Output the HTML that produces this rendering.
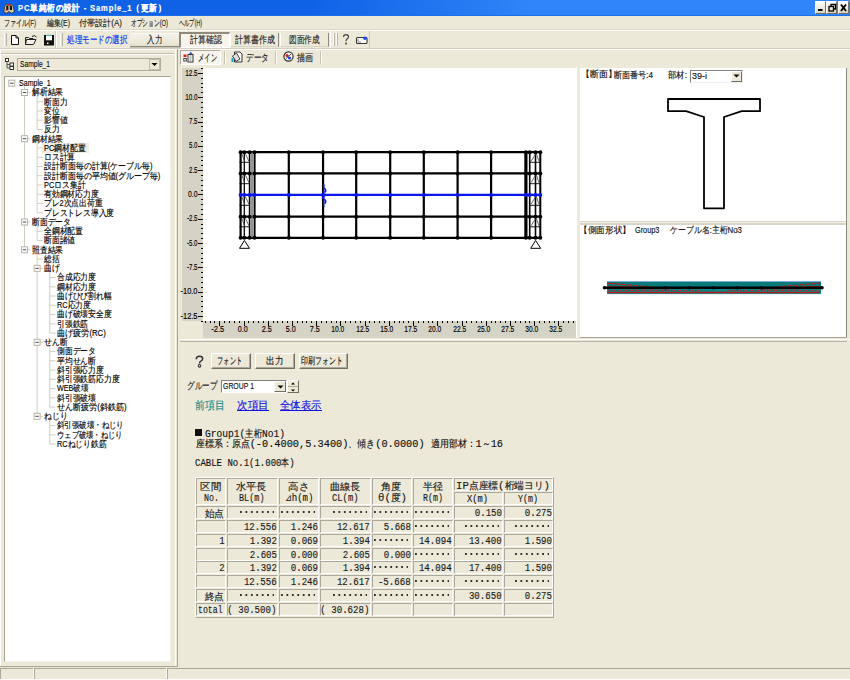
<!DOCTYPE html><html><head><meta charset="utf-8"><style>
html,body{margin:0;padding:0;width:850px;height:680px;overflow:hidden;background:#ECE9D8;}
body{position:relative;font-family:"Liberation Sans",sans-serif;}
div{position:absolute;box-sizing:border-box;}
.t{white-space:nowrap;line-height:1;-webkit-text-stroke:0.15px currentColor;}
svg{position:absolute;overflow:visible;}
</style></head><body>
<div style="left:0px;top:0px;width:850px;height:16px;background:linear-gradient(90deg,#0F62E6 0%,#0F62E6 36.5%,#2E86F8 62.6%,#2E86F8 100%);"></div>
<div style="left:0px;top:15px;width:850px;height:1px;background:#1E6EEA;"></div>
<svg style="left:3px;top:3px" width="12" height="11" viewBox="0 0 12 11">
<path d="M0.8 9 L1.8 3 L3.5 1 L6 1.8 L8.5 1 L10.2 3 L11.2 9 L8.5 10.2 L6 8.5 L3.5 10.2 Z" fill="#D8CCB0" stroke="#3a2a10" stroke-width="0.8"/>
<rect x="3.2" y="2.5" width="2.2" height="4.5" fill="#111"/><rect x="6.8" y="2.5" width="2.2" height="4.5" fill="#111"/>
<rect x="5" y="1" width="2" height="1.5" fill="#e01010"/><rect x="2.5" y="6.5" width="2" height="1.2" fill="#c02020"/>
</svg>
<div class="t" style="left:18.00px;top:3.98px;font-family:'Liberation Sans',sans-serif;font-size:9px;color:#fff;font-weight:bold;letter-spacing:1px;transform:scaleX(0.8432);transform-origin:0 0;">PC単純桁の設計 - Sample_1（更新）</div>
<div style="left:815px;top:1px;width:11px;height:13px;background:linear-gradient(180deg,#fff 0%,#ECE9D8 60%,#D8D2BC 100%);border-top:1px solid #fff;border-left:1px solid #fff;border-right:1px solid #716F64;border-bottom:1px solid #716F64;"></div>
<div style="left:826px;top:1px;width:11px;height:13px;background:linear-gradient(180deg,#fff 0%,#ECE9D8 60%,#D8D2BC 100%);border-top:1px solid #fff;border-left:1px solid #fff;border-right:1px solid #716F64;border-bottom:1px solid #716F64;"></div>
<div style="left:838px;top:1px;width:11px;height:13px;background:linear-gradient(180deg,#fff 0%,#ECE9D8 60%,#D8D2BC 100%);border-top:1px solid #fff;border-left:1px solid #fff;border-right:1px solid #716F64;border-bottom:1px solid #716F64;"></div>
<svg style="left:815px;top:1px" width="34" height="13" viewBox="0 0 34 13"><rect x="3" y="8" width="4.5" height="2" fill="#000"/><rect x="14" y="5.5" width="4.5" height="4.5" fill="none" stroke="#000" stroke-width="1.3"/><path d="M16 5.5 V3.5 H20.5 V8 H18.5" fill="none" stroke="#000" stroke-width="1.3"/><path d="M26 3.5 L31 10 M31 3.5 L26 10" stroke="#000" stroke-width="1.9"/></svg>
<div class="t" style="left:4.00px;top:19.28px;font-family:'Liberation Sans',sans-serif;font-size:9px;color:#222;transform:scaleX(0.6737);transform-origin:0 0;">ファイル(F)</div>
<div class="t" style="left:47.00px;top:19.28px;font-family:'Liberation Sans',sans-serif;font-size:9px;color:#222;transform:scaleX(0.7667);transform-origin:0 0;">編集(E)</div>
<div class="t" style="left:79.00px;top:19.28px;font-family:'Liberation Sans',sans-serif;font-size:9px;color:#222;transform:scaleX(0.8958);transform-origin:0 0;">付帯設計(A)</div>
<div class="t" style="left:131.00px;top:19.28px;font-family:'Liberation Sans',sans-serif;font-size:9px;color:#222;transform:scaleX(0.6379);transform-origin:0 0;">オプション(O)</div>
<div class="t" style="left:179.00px;top:19.28px;font-family:'Liberation Sans',sans-serif;font-size:9px;color:#222;transform:scaleX(0.5823);transform-origin:0 0;">ヘルプ(H)</div>
<div style="left:0px;top:30px;width:850px;height:1px;background:#fff;"></div>
<div style="left:0px;top:29px;width:850px;height:1px;background:#DCD8C8;"></div>
<div style="left:4px;top:33px;width:3px;height:13px;border-left:1px solid #fff;border-right:1px solid #B8B4A4;background:#E4E0D0;"></div>
<svg style="left:9px;top:34px" width="48" height="12" viewBox="0 0 48 12">
<path d="M2.5 1.5 H7 L9.5 4 V10.5 H2.5 Z" fill="#fff" stroke="#111" stroke-width="1"/><path d="M7 1.5 V4 H9.5" fill="none" stroke="#111"/>
<path d="M17.5 5.5 H27 L24.5 10.5 H16.5 Z" fill="#F4F2EA" stroke="#222"/><path d="M16.5 10.5 V3.5 H19.5 L20.5 4.5 H24 V5.5" fill="none" stroke="#222"/><path d="M23 2.5 Q25.5 0.5 27.5 3" fill="none" stroke="#222"/>
<rect x="35" y="1" width="10" height="10.5" fill="#111"/><rect x="37" y="1.8" width="6" height="4.5" fill="#fff"/><rect x="38" y="8.5" width="1.5" height="1.5" fill="#fff"/><rect x="37" y="0.8" width="6" height="1" fill="#5cc"/>
</svg>
<div style="left:56px;top:31px;width:1px;height:17px;background:#fff;"></div>
<div style="left:55px;top:31px;width:1px;height:17px;background:#D0CCBC;"></div>
<div style="left:60px;top:33px;width:3px;height:13px;border-left:1px solid #fff;border-right:1px solid #B8B4A4;background:#E4E0D0;"></div>
<div class="t" style="left:67.00px;top:34.94px;font-family:'Liberation Sans',sans-serif;font-size:9.5px;color:#0030F0;transform:scaleX(0.7500);transform-origin:0 0;">処理モードの選択</div>
<div style="left:130px;top:33px;width:49px;height:14px;background:linear-gradient(180deg,#F4F2EA 0%,#ECE9D8 70%,#E2DECE 100%);border-top:1px solid #FAF9F4;border-bottom:1px solid #8E8B7C;box-shadow:0 1px 0 #C8C4B4;"></div>
<div class="t" style="left:147.30px;top:34.94px;font-family:'Liberation Sans',sans-serif;font-size:9.5px;color:#222;transform:scaleX(0.7500);transform-origin:0 0;">入力</div>
<div style="left:179px;top:32px;width:51px;height:16px;background:#F6F4EC;border-top:2px solid #8E8B7C;border-left:2px solid #8E8B7C;border-right:1px solid #fff;border-bottom:1px solid #fff;"></div>
<div class="t" style="left:190.00px;top:35.24px;font-family:'Liberation Sans',sans-serif;font-size:9.5px;color:#222;transform:scaleX(0.8000);transform-origin:0 0;">計算確認</div>
<div style="left:230px;top:33px;width:49px;height:14px;background:#ECE9D8;border-left:1px solid #fff;border-right:1px solid #8E8B7C;border-bottom:1px solid #D8D4C4;"></div>
<div class="t" style="left:235.00px;top:34.94px;font-family:'Liberation Sans',sans-serif;font-size:9.5px;color:#222;transform:scaleX(0.8000);transform-origin:0 0;">計算書作成</div>
<div style="left:280px;top:33px;width:49px;height:14px;background:#ECE9D8;border-left:1px solid #fff;border-right:1px solid #8E8B7C;border-bottom:1px solid #D8D4C4;"></div>
<div class="t" style="left:289.00px;top:34.94px;font-family:'Liberation Sans',sans-serif;font-size:9.5px;color:#222;transform:scaleX(0.7650);transform-origin:0 0;">図面作成</div>
<div style="left:330px;top:31px;width:1px;height:17px;background:#fff;"></div>
<div style="left:333px;top:33px;width:2px;height:13px;border-left:1px solid #fff;border-right:1px solid #B8B4A4;"></div>
<div style="left:336px;top:33px;width:2px;height:13px;border-left:1px solid #fff;border-right:1px solid #B8B4A4;"></div>
<svg style="left:341px;top:33px" width="28" height="13" viewBox="0 0 28 13">
<path d="M2.5 4 Q2.5 1.6 5 1.6 Q7.5 1.6 7.5 3.7 Q7.5 5 6 5.9 Q5 6.6 5 8.2" fill="none" stroke="#444" stroke-width="1.2"/><circle cx="5" cy="10.4" r="1" fill="#444"/>
<rect x="15.5" y="4.5" width="10.5" height="6" rx="1" fill="#fff" stroke="#333" stroke-width="1.1"/><path d="M17 6 V9 H20" fill="none" stroke="#888"/><circle cx="24" cy="5.3" r="1.8" fill="#1850F0"/>
</svg>
<div style="left:369px;top:31px;width:1px;height:17px;background:#D0CCBC;"></div>
<div style="left:0px;top:48px;width:850px;height:1px;background:#D4D0C0;"></div>
<div style="left:0px;top:49px;width:850px;height:1px;background:#fff;"></div>
<div style="left:0px;top:53px;width:174px;height:1px;background:#C4C0B0;"></div>
<div style="left:0px;top:54px;width:174px;height:1px;background:#fff;"></div>
<svg style="left:5px;top:58px" width="10" height="12" viewBox="0 0 10 12">
<rect x="0.5" y="0.5" width="3" height="3" fill="#fff" stroke="#333"/><path d="M2 3.5 V10 H5 M2 6.5 H5" fill="none" stroke="#555"/>
<rect x="5" y="5" width="3.5" height="3" fill="#fff" stroke="#333"/><rect x="5" y="8.5" width="3.5" height="3" fill="#fff" stroke="#333"/>
</svg>
<div style="left:17px;top:58px;width:144px;height:13px;background:#ECE9D8;border:1px solid #B0AC9C;"></div>
<div class="t" style="left:19.70px;top:59.98px;font-family:'Liberation Sans',sans-serif;font-size:9px;color:#111;transform:scaleX(0.7402);transform-origin:0 0;">Sample_1</div>
<div style="left:149px;top:59px;width:11px;height:11px;background:#ECE9D8;border:1px solid #C0BCAC;"></div>
<svg style="left:151px;top:62px" width="7" height="5" viewBox="0 0 7 5"><path d="M0.5 1 H6.5 L3.5 4 Z" fill="#000"/></svg>
<div style="left:175px;top:49px;width:1px;height:617px;background:#fff;"></div>
<div style="left:177px;top:49px;width:1px;height:618px;background:#A8A494;"></div>
<div style="left:0px;top:666px;width:178px;height:1px;background:#A8A494;"></div>
<div style="left:4px;top:76px;width:167px;height:586px;background:#fff;border-top:1px solid #A8A494;border-left:1px solid #A8A494;border-right:1px solid #F4F2EA;border-bottom:1px solid #F4F2EA;"></div>
<svg style="left:0px;top:0px" width="176" height="680" viewBox="0 0 176 680"><line x1="24.5" y1="86.7" x2="24.5" y2="249.8" stroke="#CFCEC0" stroke-width="1"/><line x1="37.1" y1="96.0" x2="37.1" y2="129.5" stroke="#CFCEC0" stroke-width="1"/><line x1="37.1" y1="142.2" x2="37.1" y2="212.8" stroke="#CFCEC0" stroke-width="1"/><line x1="37.1" y1="225.5" x2="37.1" y2="240.5" stroke="#CFCEC0" stroke-width="1"/><line x1="37.1" y1="253.3" x2="37.1" y2="416.3" stroke="#CFCEC0" stroke-width="1"/><line x1="49.8" y1="271.8" x2="49.8" y2="333.1" stroke="#CFCEC0" stroke-width="1"/><line x1="49.8" y1="345.8" x2="49.8" y2="407.1" stroke="#CFCEC0" stroke-width="1"/><line x1="49.8" y1="419.8" x2="49.8" y2="444.1" stroke="#CFCEC0" stroke-width="1"/><line x1="24.5" y1="92.5" x2="30.1" y2="92.5" stroke="#CFCEC0" stroke-width="1"/><line x1="37.1" y1="101.7" x2="42.8" y2="101.7" stroke="#CFCEC0" stroke-width="1"/><line x1="37.1" y1="111.0" x2="42.8" y2="111.0" stroke="#CFCEC0" stroke-width="1"/><line x1="37.1" y1="120.2" x2="42.8" y2="120.2" stroke="#CFCEC0" stroke-width="1"/><line x1="37.1" y1="129.5" x2="42.8" y2="129.5" stroke="#CFCEC0" stroke-width="1"/><line x1="24.5" y1="138.7" x2="30.1" y2="138.7" stroke="#CFCEC0" stroke-width="1"/><line x1="37.1" y1="148.0" x2="42.8" y2="148.0" stroke="#CFCEC0" stroke-width="1"/><line x1="37.1" y1="157.2" x2="42.8" y2="157.2" stroke="#CFCEC0" stroke-width="1"/><line x1="37.1" y1="166.5" x2="42.8" y2="166.5" stroke="#CFCEC0" stroke-width="1"/><line x1="37.1" y1="175.7" x2="42.8" y2="175.7" stroke="#CFCEC0" stroke-width="1"/><line x1="37.1" y1="185.0" x2="42.8" y2="185.0" stroke="#CFCEC0" stroke-width="1"/><line x1="37.1" y1="194.2" x2="42.8" y2="194.2" stroke="#CFCEC0" stroke-width="1"/><line x1="37.1" y1="203.5" x2="42.8" y2="203.5" stroke="#CFCEC0" stroke-width="1"/><line x1="37.1" y1="212.8" x2="42.8" y2="212.8" stroke="#CFCEC0" stroke-width="1"/><line x1="24.5" y1="222.0" x2="30.1" y2="222.0" stroke="#CFCEC0" stroke-width="1"/><line x1="37.1" y1="231.3" x2="42.8" y2="231.3" stroke="#CFCEC0" stroke-width="1"/><line x1="37.1" y1="240.5" x2="42.8" y2="240.5" stroke="#CFCEC0" stroke-width="1"/><line x1="24.5" y1="249.8" x2="30.1" y2="249.8" stroke="#CFCEC0" stroke-width="1"/><line x1="37.1" y1="259.0" x2="42.8" y2="259.0" stroke="#CFCEC0" stroke-width="1"/><line x1="37.1" y1="268.3" x2="42.8" y2="268.3" stroke="#CFCEC0" stroke-width="1"/><line x1="49.8" y1="277.5" x2="55.5" y2="277.5" stroke="#CFCEC0" stroke-width="1"/><line x1="49.8" y1="286.8" x2="55.5" y2="286.8" stroke="#CFCEC0" stroke-width="1"/><line x1="49.8" y1="296.0" x2="55.5" y2="296.0" stroke="#CFCEC0" stroke-width="1"/><line x1="49.8" y1="305.3" x2="55.5" y2="305.3" stroke="#CFCEC0" stroke-width="1"/><line x1="49.8" y1="314.6" x2="55.5" y2="314.6" stroke="#CFCEC0" stroke-width="1"/><line x1="49.8" y1="323.8" x2="55.5" y2="323.8" stroke="#CFCEC0" stroke-width="1"/><line x1="49.8" y1="333.1" x2="55.5" y2="333.1" stroke="#CFCEC0" stroke-width="1"/><line x1="37.1" y1="342.3" x2="42.8" y2="342.3" stroke="#CFCEC0" stroke-width="1"/><line x1="49.8" y1="351.6" x2="55.5" y2="351.6" stroke="#CFCEC0" stroke-width="1"/><line x1="49.8" y1="360.8" x2="55.5" y2="360.8" stroke="#CFCEC0" stroke-width="1"/><line x1="49.8" y1="370.1" x2="55.5" y2="370.1" stroke="#CFCEC0" stroke-width="1"/><line x1="49.8" y1="379.3" x2="55.5" y2="379.3" stroke="#CFCEC0" stroke-width="1"/><line x1="49.8" y1="388.6" x2="55.5" y2="388.6" stroke="#CFCEC0" stroke-width="1"/><line x1="49.8" y1="397.8" x2="55.5" y2="397.8" stroke="#CFCEC0" stroke-width="1"/><line x1="49.8" y1="407.1" x2="55.5" y2="407.1" stroke="#CFCEC0" stroke-width="1"/><line x1="37.1" y1="416.3" x2="42.8" y2="416.3" stroke="#CFCEC0" stroke-width="1"/><line x1="49.8" y1="425.6" x2="55.5" y2="425.6" stroke="#CFCEC0" stroke-width="1"/><line x1="49.8" y1="434.9" x2="55.5" y2="434.9" stroke="#CFCEC0" stroke-width="1"/><line x1="49.8" y1="444.1" x2="55.5" y2="444.1" stroke="#CFCEC0" stroke-width="1"/><rect x="8.8" y="80.2" width="6" height="6" fill="#fff" stroke="#B4B2A0" stroke-width="1"/><line x1="10.1" y1="83.2" x2="13.5" y2="83.2" stroke="#444" stroke-width="1"/><rect x="21.5" y="89.5" width="6" height="6" fill="#fff" stroke="#B4B2A0" stroke-width="1"/><line x1="22.8" y1="92.5" x2="26.2" y2="92.5" stroke="#444" stroke-width="1"/><rect x="21.5" y="135.7" width="6" height="6" fill="#fff" stroke="#B4B2A0" stroke-width="1"/><line x1="22.8" y1="138.7" x2="26.2" y2="138.7" stroke="#444" stroke-width="1"/><rect x="21.5" y="219.0" width="6" height="6" fill="#fff" stroke="#B4B2A0" stroke-width="1"/><line x1="22.8" y1="222.0" x2="26.2" y2="222.0" stroke="#444" stroke-width="1"/><rect x="21.5" y="246.8" width="6" height="6" fill="#fff" stroke="#B4B2A0" stroke-width="1"/><line x1="22.8" y1="249.8" x2="26.2" y2="249.8" stroke="#444" stroke-width="1"/><rect x="34.1" y="265.3" width="6" height="6" fill="#fff" stroke="#B4B2A0" stroke-width="1"/><line x1="35.4" y1="268.3" x2="38.8" y2="268.3" stroke="#444" stroke-width="1"/><rect x="34.1" y="339.3" width="6" height="6" fill="#fff" stroke="#B4B2A0" stroke-width="1"/><line x1="35.4" y1="342.3" x2="38.8" y2="342.3" stroke="#444" stroke-width="1"/><rect x="34.1" y="413.3" width="6" height="6" fill="#fff" stroke="#B4B2A0" stroke-width="1"/><line x1="35.4" y1="416.3" x2="38.8" y2="416.3" stroke="#444" stroke-width="1"/></svg>
<div class="t" style="left:19.00px;top:79.07px;font-family:'Liberation Sans',sans-serif;font-size:8.6px;color:#000;transform:scaleX(0.8216);transform-origin:0 0;">Sample_1</div>
<div class="t" style="left:31.65px;top:88.33px;font-family:'Liberation Sans',sans-serif;font-size:8.6px;color:#000;transform:scaleX(0.8667);transform-origin:0 0;">解析結果</div>
<div class="t" style="left:44.30px;top:97.58px;font-family:'Liberation Sans',sans-serif;font-size:8.6px;color:#000;transform:scaleX(0.8667);transform-origin:0 0;">断面力</div>
<div class="t" style="left:44.30px;top:106.83px;font-family:'Liberation Sans',sans-serif;font-size:8.6px;color:#000;transform:scaleX(0.8667);transform-origin:0 0;">変位</div>
<div class="t" style="left:44.30px;top:116.09px;font-family:'Liberation Sans',sans-serif;font-size:8.6px;color:#000;transform:scaleX(0.8667);transform-origin:0 0;">影響値</div>
<div class="t" style="left:44.30px;top:125.34px;font-family:'Liberation Sans',sans-serif;font-size:8.6px;color:#000;transform:scaleX(0.8667);transform-origin:0 0;">反力</div>
<div class="t" style="left:31.65px;top:134.60px;font-family:'Liberation Sans',sans-serif;font-size:8.6px;color:#000;transform:scaleX(0.8667);transform-origin:0 0;">鋼材結果</div>
<div style="left:42px;top:143px;width:47px;height:10px;background:#EFEDE2;"></div>
<div class="t" style="left:44.30px;top:143.85px;font-family:'Liberation Sans',sans-serif;font-size:8.6px;color:#000;transform:scaleX(0.8675);transform-origin:0 0;">PC鋼材配置</div>
<div class="t" style="left:44.30px;top:153.10px;font-family:'Liberation Sans',sans-serif;font-size:8.6px;color:#000;transform:scaleX(0.8667);transform-origin:0 0;">ロス計算</div>
<div class="t" style="left:44.30px;top:162.36px;font-family:'Liberation Sans',sans-serif;font-size:8.6px;color:#000;transform:scaleX(0.8848);transform-origin:0 0;">設計断面毎の計算(ケーブル毎)</div>
<div class="t" style="left:44.30px;top:171.61px;font-family:'Liberation Sans',sans-serif;font-size:8.6px;color:#000;transform:scaleX(0.8836);transform-origin:0 0;">設計断面毎の平均値(グループ毎)</div>
<div class="t" style="left:44.30px;top:180.87px;font-family:'Liberation Sans',sans-serif;font-size:8.6px;color:#000;transform:scaleX(0.8675);transform-origin:0 0;">PCロス集計</div>
<div class="t" style="left:44.30px;top:190.12px;font-family:'Liberation Sans',sans-serif;font-size:8.6px;color:#000;transform:scaleX(0.8667);transform-origin:0 0;">有効鋼材応力度</div>
<div class="t" style="left:44.30px;top:199.37px;font-family:'Liberation Sans',sans-serif;font-size:8.6px;color:#000;transform:scaleX(0.8616);transform-origin:0 0;">プレ2次点出荷重</div>
<div class="t" style="left:44.30px;top:208.63px;font-family:'Liberation Sans',sans-serif;font-size:8.6px;color:#000;transform:scaleX(0.8667);transform-origin:0 0;">プレストレス導入度</div>
<div class="t" style="left:31.65px;top:217.88px;font-family:'Liberation Sans',sans-serif;font-size:8.6px;color:#000;transform:scaleX(0.8667);transform-origin:0 0;">断面データ</div>
<div class="t" style="left:44.30px;top:227.14px;font-family:'Liberation Sans',sans-serif;font-size:8.6px;color:#000;transform:scaleX(0.8667);transform-origin:0 0;">全鋼材配置</div>
<div class="t" style="left:44.30px;top:236.39px;font-family:'Liberation Sans',sans-serif;font-size:8.6px;color:#000;transform:scaleX(0.8667);transform-origin:0 0;">断面諸値</div>
<div class="t" style="left:31.65px;top:245.64px;font-family:'Liberation Sans',sans-serif;font-size:8.6px;color:#000;transform:scaleX(0.8667);transform-origin:0 0;">照査結果</div>
<div class="t" style="left:44.30px;top:254.90px;font-family:'Liberation Sans',sans-serif;font-size:8.6px;color:#000;transform:scaleX(0.8667);transform-origin:0 0;">総括</div>
<div class="t" style="left:44.30px;top:264.15px;font-family:'Liberation Sans',sans-serif;font-size:8.6px;color:#000;transform:scaleX(0.8667);transform-origin:0 0;">曲げ</div>
<div class="t" style="left:56.95px;top:273.41px;font-family:'Liberation Sans',sans-serif;font-size:8.6px;color:#000;transform:scaleX(0.8667);transform-origin:0 0;">合成応力度</div>
<div class="t" style="left:56.95px;top:282.66px;font-family:'Liberation Sans',sans-serif;font-size:8.6px;color:#000;transform:scaleX(0.8667);transform-origin:0 0;">鋼材応力度</div>
<div class="t" style="left:56.95px;top:291.91px;font-family:'Liberation Sans',sans-serif;font-size:8.6px;color:#000;transform:scaleX(0.8667);transform-origin:0 0;">曲げひび割れ幅</div>
<div class="t" style="left:56.95px;top:301.17px;font-family:'Liberation Sans',sans-serif;font-size:8.6px;color:#000;transform:scaleX(0.8574);transform-origin:0 0;">RC応力度</div>
<div class="t" style="left:56.95px;top:310.42px;font-family:'Liberation Sans',sans-serif;font-size:8.6px;color:#000;transform:scaleX(0.8667);transform-origin:0 0;">曲げ破壊安全度</div>
<div class="t" style="left:56.95px;top:319.68px;font-family:'Liberation Sans',sans-serif;font-size:8.6px;color:#000;transform:scaleX(0.8667);transform-origin:0 0;">引張鉄筋</div>
<div class="t" style="left:56.95px;top:328.93px;font-family:'Liberation Sans',sans-serif;font-size:8.6px;color:#000;transform:scaleX(0.9014);transform-origin:0 0;">曲げ疲労(RC)</div>
<div class="t" style="left:44.30px;top:338.18px;font-family:'Liberation Sans',sans-serif;font-size:8.6px;color:#000;transform:scaleX(0.8667);transform-origin:0 0;">せん断</div>
<div class="t" style="left:56.95px;top:347.44px;font-family:'Liberation Sans',sans-serif;font-size:8.6px;color:#000;transform:scaleX(0.8667);transform-origin:0 0;">側面データ</div>
<div class="t" style="left:56.95px;top:356.69px;font-family:'Liberation Sans',sans-serif;font-size:8.6px;color:#000;transform:scaleX(0.8667);transform-origin:0 0;">平均せん断</div>
<div class="t" style="left:56.95px;top:365.95px;font-family:'Liberation Sans',sans-serif;font-size:8.6px;color:#000;transform:scaleX(0.8667);transform-origin:0 0;">斜引張応力度</div>
<div class="t" style="left:56.95px;top:375.20px;font-family:'Liberation Sans',sans-serif;font-size:8.6px;color:#000;transform:scaleX(0.8667);transform-origin:0 0;">斜引張鉄筋応力度</div>
<div class="t" style="left:56.95px;top:384.45px;font-family:'Liberation Sans',sans-serif;font-size:8.6px;color:#000;transform:scaleX(0.8303);transform-origin:0 0;">WEB破壊</div>
<div class="t" style="left:56.95px;top:393.71px;font-family:'Liberation Sans',sans-serif;font-size:8.6px;color:#000;transform:scaleX(0.8667);transform-origin:0 0;">斜引張破壊</div>
<div class="t" style="left:56.95px;top:402.96px;font-family:'Liberation Sans',sans-serif;font-size:8.6px;color:#000;transform:scaleX(0.8954);transform-origin:0 0;">せん断疲労(斜鉄筋)</div>
<div class="t" style="left:44.30px;top:412.22px;font-family:'Liberation Sans',sans-serif;font-size:8.6px;color:#000;transform:scaleX(0.8667);transform-origin:0 0;">ねじり</div>
<div class="t" style="left:56.95px;top:421.47px;font-family:'Liberation Sans',sans-serif;font-size:8.6px;color:#000;transform:scaleX(0.8259);transform-origin:0 0;">斜引張破壊・ねじり</div>
<div class="t" style="left:56.95px;top:430.72px;font-family:'Liberation Sans',sans-serif;font-size:8.6px;color:#000;transform:scaleX(0.8062);transform-origin:0 0;">ウェブ破壊・ねじり</div>
<div class="t" style="left:56.95px;top:439.98px;font-family:'Liberation Sans',sans-serif;font-size:8.6px;color:#000;transform:scaleX(0.8603);transform-origin:0 0;">RCねじり鉄筋</div>
<div style="left:180px;top:50px;width:41px;height:15px;background:#F6F4EC;border-top:1px solid #ACA899;border-left:1px solid #ACA899;border-right:1px solid #fff;border-bottom:1px solid #fff;"></div>
<svg style="left:183px;top:51px" width="12" height="12" viewBox="0 0 12 12">
<rect x="0.5" y="3.5" width="3" height="2.5" fill="#E01818"/><rect x="0.8" y="7.5" width="2.5" height="2.5" fill="#fff" stroke="#333" stroke-width="0.9"/>
<rect x="5" y="3.5" width="5" height="7.5" fill="#fff" stroke="#333" stroke-width="1"/><path d="M6 2.8 L7.8 0.8 L9.5 2.8 Z" fill="#1840E0"/><path d="M6.5 5 H8.5 M6.5 7 H8.5 M6.5 9 H8.5" stroke="#666" stroke-width="0.8"/>
</svg>
<div class="t" style="left:198.30px;top:52.94px;font-family:'Liberation Sans',sans-serif;font-size:9.5px;color:#222;transform:scaleX(0.6333);transform-origin:0 0;">メイン</div>
<div style="left:224px;top:51px;width:2px;height:13px;border-left:1px solid #C8C4B4;border-right:1px solid #fff;"></div>
<svg style="left:231px;top:51px" width="13" height="12" viewBox="0 0 13 12">
<path d="M3.5 1 H9 L11 3 V11 H3.5 Z" fill="#fff" stroke="#333"/><path d="M1.5 5 L5.5 2 L9 8 L5 10.5 Z" fill="#ddd" stroke="#333" stroke-width="0.9"/><rect x="0.5" y="7" width="2" height="4" fill="#18A0C0"/>
</svg>
<div class="t" style="left:246.00px;top:52.94px;font-family:'Liberation Sans',sans-serif;font-size:9.5px;color:#222;transform:scaleX(0.7667);transform-origin:0 0;">データ</div>
<div style="left:275px;top:51px;width:2px;height:13px;border-left:1px solid #C8C4B4;border-right:1px solid #fff;"></div>
<svg style="left:283px;top:51px" width="11" height="11" viewBox="0 0 11 11">
<circle cx="5.5" cy="5.5" r="4.6" fill="#fff" stroke="#333" stroke-width="1.2"/><circle cx="4" cy="4.5" r="1.6" fill="#E01818"/><circle cx="6.5" cy="7" r="1.6" fill="#1840E0"/><path d="M3 7.5 L8 3" stroke="#333" stroke-width="0.9"/>
</svg>
<div class="t" style="left:297.00px;top:52.94px;font-family:'Liberation Sans',sans-serif;font-size:9.5px;color:#222;transform:scaleX(0.8000);transform-origin:0 0;">描画</div>
<div style="left:320px;top:51px;width:2px;height:13px;border-left:1px solid #C8C4B4;border-right:1px solid #fff;"></div>
<div style="left:182px;top:68px;width:21px;height:253px;background:#D5D2C6;"></div>
<div style="left:203px;top:321px;width:373px;height:17px;background:#D5D2C6;"></div>
<div style="left:203px;top:68px;width:373px;height:253px;background:#fff;"></div>
<svg style="left:0px;top:0px" width="850" height="345" viewBox="0 0 850 345"><rect x="201" y="321.0" width="2" height="1" fill="#000"/><line x1="198" y1="316.5" x2="203" y2="316.5" stroke="#000" stroke-width="1"/><rect x="201" y="311.0" width="2" height="1" fill="#000"/><rect x="201" y="306.0" width="2" height="1" fill="#000"/><rect x="201" y="301.0" width="2" height="1" fill="#000"/><rect x="201" y="296.0" width="2" height="1" fill="#000"/><line x1="198" y1="292.5" x2="203" y2="292.5" stroke="#000" stroke-width="1"/><rect x="201" y="287.0" width="2" height="1" fill="#000"/><rect x="201" y="282.0" width="2" height="1" fill="#000"/><rect x="201" y="277.0" width="2" height="1" fill="#000"/><rect x="201" y="272.0" width="2" height="1" fill="#000"/><line x1="198" y1="267.5" x2="203" y2="267.5" stroke="#000" stroke-width="1"/><rect x="201" y="262.0" width="2" height="1" fill="#000"/><rect x="201" y="258.0" width="2" height="1" fill="#000"/><rect x="201" y="253.0" width="2" height="1" fill="#000"/><rect x="201" y="248.0" width="2" height="1" fill="#000"/><line x1="198" y1="243.5" x2="203" y2="243.5" stroke="#000" stroke-width="1"/><rect x="201" y="238.0" width="2" height="1" fill="#000"/><rect x="201" y="233.0" width="2" height="1" fill="#000"/><rect x="201" y="228.0" width="2" height="1" fill="#000"/><rect x="201" y="224.0" width="2" height="1" fill="#000"/><line x1="198" y1="219.5" x2="203" y2="219.5" stroke="#000" stroke-width="1"/><rect x="201" y="214.0" width="2" height="1" fill="#000"/><rect x="201" y="209.0" width="2" height="1" fill="#000"/><rect x="201" y="204.0" width="2" height="1" fill="#000"/><rect x="201" y="199.0" width="2" height="1" fill="#000"/><line x1="198" y1="194.5" x2="203" y2="194.5" stroke="#000" stroke-width="1"/><rect x="201" y="190.0" width="2" height="1" fill="#000"/><rect x="201" y="185.0" width="2" height="1" fill="#000"/><rect x="201" y="180.0" width="2" height="1" fill="#000"/><rect x="201" y="175.0" width="2" height="1" fill="#000"/><line x1="198" y1="170.5" x2="203" y2="170.5" stroke="#000" stroke-width="1"/><rect x="201" y="165.0" width="2" height="1" fill="#000"/><rect x="201" y="160.0" width="2" height="1" fill="#000"/><rect x="201" y="156.0" width="2" height="1" fill="#000"/><rect x="201" y="151.0" width="2" height="1" fill="#000"/><line x1="198" y1="146.5" x2="203" y2="146.5" stroke="#000" stroke-width="1"/><rect x="201" y="141.0" width="2" height="1" fill="#000"/><rect x="201" y="136.0" width="2" height="1" fill="#000"/><rect x="201" y="131.0" width="2" height="1" fill="#000"/><rect x="201" y="126.0" width="2" height="1" fill="#000"/><line x1="198" y1="122.5" x2="203" y2="122.5" stroke="#000" stroke-width="1"/><rect x="201" y="117.0" width="2" height="1" fill="#000"/><rect x="201" y="112.0" width="2" height="1" fill="#000"/><rect x="201" y="107.0" width="2" height="1" fill="#000"/><rect x="201" y="102.0" width="2" height="1" fill="#000"/><line x1="198" y1="97.5" x2="203" y2="97.5" stroke="#000" stroke-width="1"/><rect x="201" y="92.0" width="2" height="1" fill="#000"/><rect x="201" y="87.0" width="2" height="1" fill="#000"/><rect x="201" y="83.0" width="2" height="1" fill="#000"/><rect x="201" y="78.0" width="2" height="1" fill="#000"/><line x1="198" y1="73.5" x2="203" y2="73.5" stroke="#000" stroke-width="1"/><rect x="201" y="68.0" width="2" height="1" fill="#000"/><rect x="205.0" y="321" width="1" height="2" fill="#000"/><rect x="210.0" y="321" width="1" height="2" fill="#000"/><rect x="214.0" y="321" width="1" height="2" fill="#000"/><line x1="219.5" y1="321" x2="219.5" y2="326" stroke="#000" stroke-width="1"/><rect x="224.0" y="321" width="1" height="2" fill="#000"/><rect x="229.0" y="321" width="1" height="2" fill="#000"/><rect x="234.0" y="321" width="1" height="2" fill="#000"/><rect x="239.0" y="321" width="1" height="2" fill="#000"/><line x1="244.5" y1="321" x2="244.5" y2="326" stroke="#000" stroke-width="1"/><rect x="248.0" y="321" width="1" height="2" fill="#000"/><rect x="253.0" y="321" width="1" height="2" fill="#000"/><rect x="258.0" y="321" width="1" height="2" fill="#000"/><rect x="263.0" y="321" width="1" height="2" fill="#000"/><line x1="268.5" y1="321" x2="268.5" y2="326" stroke="#000" stroke-width="1"/><rect x="273.0" y="321" width="1" height="2" fill="#000"/><rect x="277.0" y="321" width="1" height="2" fill="#000"/><rect x="282.0" y="321" width="1" height="2" fill="#000"/><rect x="287.0" y="321" width="1" height="2" fill="#000"/><line x1="292.5" y1="321" x2="292.5" y2="326" stroke="#000" stroke-width="1"/><rect x="297.0" y="321" width="1" height="2" fill="#000"/><rect x="302.0" y="321" width="1" height="2" fill="#000"/><rect x="306.0" y="321" width="1" height="2" fill="#000"/><rect x="311.0" y="321" width="1" height="2" fill="#000"/><line x1="316.5" y1="321" x2="316.5" y2="326" stroke="#000" stroke-width="1"/><rect x="321.0" y="321" width="1" height="2" fill="#000"/><rect x="326.0" y="321" width="1" height="2" fill="#000"/><rect x="331.0" y="321" width="1" height="2" fill="#000"/><rect x="336.0" y="321" width="1" height="2" fill="#000"/><line x1="340.5" y1="321" x2="340.5" y2="326" stroke="#000" stroke-width="1"/><rect x="345.0" y="321" width="1" height="2" fill="#000"/><rect x="350.0" y="321" width="1" height="2" fill="#000"/><rect x="355.0" y="321" width="1" height="2" fill="#000"/><rect x="360.0" y="321" width="1" height="2" fill="#000"/><line x1="365.5" y1="321" x2="365.5" y2="326" stroke="#000" stroke-width="1"/><rect x="369.0" y="321" width="1" height="2" fill="#000"/><rect x="374.0" y="321" width="1" height="2" fill="#000"/><rect x="379.0" y="321" width="1" height="2" fill="#000"/><rect x="384.0" y="321" width="1" height="2" fill="#000"/><line x1="389.5" y1="321" x2="389.5" y2="326" stroke="#000" stroke-width="1"/><rect x="394.0" y="321" width="1" height="2" fill="#000"/><rect x="399.0" y="321" width="1" height="2" fill="#000"/><rect x="403.0" y="321" width="1" height="2" fill="#000"/><rect x="408.0" y="321" width="1" height="2" fill="#000"/><line x1="413.5" y1="321" x2="413.5" y2="326" stroke="#000" stroke-width="1"/><rect x="418.0" y="321" width="1" height="2" fill="#000"/><rect x="423.0" y="321" width="1" height="2" fill="#000"/><rect x="428.0" y="321" width="1" height="2" fill="#000"/><rect x="432.0" y="321" width="1" height="2" fill="#000"/><line x1="437.5" y1="321" x2="437.5" y2="326" stroke="#000" stroke-width="1"/><rect x="442.0" y="321" width="1" height="2" fill="#000"/><rect x="447.0" y="321" width="1" height="2" fill="#000"/><rect x="452.0" y="321" width="1" height="2" fill="#000"/><rect x="457.0" y="321" width="1" height="2" fill="#000"/><line x1="462.5" y1="321" x2="462.5" y2="326" stroke="#000" stroke-width="1"/><rect x="466.0" y="321" width="1" height="2" fill="#000"/><rect x="471.0" y="321" width="1" height="2" fill="#000"/><rect x="476.0" y="321" width="1" height="2" fill="#000"/><rect x="481.0" y="321" width="1" height="2" fill="#000"/><line x1="486.5" y1="321" x2="486.5" y2="326" stroke="#000" stroke-width="1"/><rect x="491.0" y="321" width="1" height="2" fill="#000"/><rect x="495.0" y="321" width="1" height="2" fill="#000"/><rect x="500.0" y="321" width="1" height="2" fill="#000"/><rect x="505.0" y="321" width="1" height="2" fill="#000"/><line x1="510.5" y1="321" x2="510.5" y2="326" stroke="#000" stroke-width="1"/><rect x="515.0" y="321" width="1" height="2" fill="#000"/><rect x="520.0" y="321" width="1" height="2" fill="#000"/><rect x="525.0" y="321" width="1" height="2" fill="#000"/><rect x="529.0" y="321" width="1" height="2" fill="#000"/><line x1="534.5" y1="321" x2="534.5" y2="326" stroke="#000" stroke-width="1"/><rect x="539.0" y="321" width="1" height="2" fill="#000"/><rect x="544.0" y="321" width="1" height="2" fill="#000"/><rect x="549.0" y="321" width="1" height="2" fill="#000"/><rect x="554.0" y="321" width="1" height="2" fill="#000"/><line x1="558.5" y1="321" x2="558.5" y2="326" stroke="#000" stroke-width="1"/><rect x="563.0" y="321" width="1" height="2" fill="#000"/><rect x="568.0" y="321" width="1" height="2" fill="#000"/><rect x="573.0" y="321" width="1" height="2" fill="#000"/></svg>
<div class="t" style="right:652.00px;top:311.58px;font-family:'Liberation Sans',sans-serif;font-size:9px;color:#000;transform:scaleX(0.8286);transform-origin:100% 0;">-12.5</div>
<div class="t" style="right:652.00px;top:287.28px;font-family:'Liberation Sans',sans-serif;font-size:9px;color:#000;transform:scaleX(0.8286);transform-origin:100% 0;">-10.0</div>
<div class="t" style="right:652.00px;top:262.98px;font-family:'Liberation Sans',sans-serif;font-size:9px;color:#000;transform:scaleX(0.6767);transform-origin:100% 0;">-7.5</div>
<div class="t" style="right:652.00px;top:238.68px;font-family:'Liberation Sans',sans-serif;font-size:9px;color:#000;transform:scaleX(0.6767);transform-origin:100% 0;">-5.0</div>
<div class="t" style="right:652.00px;top:214.38px;font-family:'Liberation Sans',sans-serif;font-size:9px;color:#000;transform:scaleX(0.6767);transform-origin:100% 0;">-2.5</div>
<div class="t" style="right:652.00px;top:190.08px;font-family:'Liberation Sans',sans-serif;font-size:9px;color:#000;transform:scaleX(0.7591);transform-origin:100% 0;">0.0</div>
<div class="t" style="right:652.00px;top:165.78px;font-family:'Liberation Sans',sans-serif;font-size:9px;color:#000;transform:scaleX(0.6792);transform-origin:100% 0;">2.5</div>
<div class="t" style="right:652.00px;top:141.48px;font-family:'Liberation Sans',sans-serif;font-size:9px;color:#000;transform:scaleX(0.6792);transform-origin:100% 0;">5.0</div>
<div class="t" style="right:652.00px;top:117.18px;font-family:'Liberation Sans',sans-serif;font-size:9px;color:#000;transform:scaleX(0.6792);transform-origin:100% 0;">7.5</div>
<div class="t" style="right:652.00px;top:92.88px;font-family:'Liberation Sans',sans-serif;font-size:9px;color:#000;transform:scaleX(0.7073);transform-origin:100% 0;">10.0</div>
<div class="t" style="right:652.00px;top:68.58px;font-family:'Liberation Sans',sans-serif;font-size:9px;color:#000;transform:scaleX(0.7073);transform-origin:100% 0;">12.5</div>
<div class="t" style="left:219.28px;top:324.78px;font-family:'Liberation Sans',sans-serif;font-size:9px;color:#000;transform:translateX(-50%) scaleX(0.8379);transform-origin:0 0;">-2.5</div>
<div class="t" style="left:243.50px;top:324.78px;font-family:'Liberation Sans',sans-serif;font-size:9px;color:#000;transform:translateX(-50%) scaleX(0.7990);transform-origin:0 0;">0.0</div>
<div class="t" style="left:267.73px;top:324.78px;font-family:'Liberation Sans',sans-serif;font-size:9px;color:#000;transform:translateX(-50%) scaleX(0.7990);transform-origin:0 0;">2.5</div>
<div class="t" style="left:291.95px;top:324.78px;font-family:'Liberation Sans',sans-serif;font-size:9px;color:#000;transform:translateX(-50%) scaleX(0.7990);transform-origin:0 0;">5.0</div>
<div class="t" style="left:316.18px;top:324.78px;font-family:'Liberation Sans',sans-serif;font-size:9px;color:#000;transform:translateX(-50%) scaleX(0.7990);transform-origin:0 0;">7.5</div>
<div class="t" style="left:340.40px;top:324.78px;font-family:'Liberation Sans',sans-serif;font-size:9px;color:#000;transform:translateX(-50%) scaleX(0.7415);transform-origin:0 0;">10.0</div>
<div class="t" style="left:364.62px;top:324.78px;font-family:'Liberation Sans',sans-serif;font-size:9px;color:#000;transform:translateX(-50%) scaleX(0.7415);transform-origin:0 0;">12.5</div>
<div class="t" style="left:388.85px;top:324.78px;font-family:'Liberation Sans',sans-serif;font-size:9px;color:#000;transform:translateX(-50%) scaleX(0.7415);transform-origin:0 0;">15.0</div>
<div class="t" style="left:413.07px;top:324.78px;font-family:'Liberation Sans',sans-serif;font-size:9px;color:#000;transform:translateX(-50%) scaleX(0.7415);transform-origin:0 0;">17.5</div>
<div class="t" style="left:437.30px;top:324.78px;font-family:'Liberation Sans',sans-serif;font-size:9px;color:#000;transform:translateX(-50%) scaleX(0.7415);transform-origin:0 0;">20.0</div>
<div class="t" style="left:461.52px;top:324.78px;font-family:'Liberation Sans',sans-serif;font-size:9px;color:#000;transform:translateX(-50%) scaleX(0.7415);transform-origin:0 0;">22.5</div>
<div class="t" style="left:485.75px;top:324.78px;font-family:'Liberation Sans',sans-serif;font-size:9px;color:#000;transform:translateX(-50%) scaleX(0.7415);transform-origin:0 0;">25.0</div>
<div class="t" style="left:509.97px;top:324.78px;font-family:'Liberation Sans',sans-serif;font-size:9px;color:#000;transform:translateX(-50%) scaleX(0.7415);transform-origin:0 0;">27.5</div>
<div class="t" style="left:534.20px;top:324.78px;font-family:'Liberation Sans',sans-serif;font-size:9px;color:#000;transform:translateX(-50%) scaleX(0.7415);transform-origin:0 0;">30.0</div>
<div class="t" style="left:558.42px;top:324.78px;font-family:'Liberation Sans',sans-serif;font-size:9px;color:#000;transform:translateX(-50%) scaleX(0.7415);transform-origin:0 0;">32.5</div>
<svg style="left:0px;top:0px" width="580" height="340" viewBox="0 0 580 340"><line x1="239.5" y1="152.2" x2="541" y2="152.2" stroke="#000" stroke-width="2.2"/><line x1="239.5" y1="173.4" x2="541" y2="173.4" stroke="#000" stroke-width="2.2"/><line x1="239.5" y1="216.7" x2="541" y2="216.7" stroke="#000" stroke-width="2.2"/><line x1="239.5" y1="237.8" x2="541" y2="237.8" stroke="#000" stroke-width="2.2"/><line x1="240.6" y1="152.2" x2="240.6" y2="237.8" stroke="#000" stroke-width="2.2"/><line x1="244.3" y1="152.2" x2="244.3" y2="237.8" stroke="#000" stroke-width="1.3"/><line x1="249.6" y1="152.2" x2="249.6" y2="237.8" stroke="#000" stroke-width="1.6"/><line x1="252.0" y1="152.2" x2="252.0" y2="237.8" stroke="#808080" stroke-width="1.7"/><line x1="254.6" y1="152.2" x2="254.6" y2="237.8" stroke="#000" stroke-width="2.0"/><line x1="288.8" y1="152.2" x2="288.8" y2="237.8" stroke="#000" stroke-width="2.2"/><line x1="323.05" y1="152.2" x2="323.05" y2="237.8" stroke="#000" stroke-width="2.2"/><line x1="356.2" y1="152.2" x2="356.2" y2="237.8" stroke="#000" stroke-width="2.2"/><line x1="390.2" y1="152.2" x2="390.2" y2="237.8" stroke="#000" stroke-width="2.2"/><line x1="423.8" y1="152.2" x2="423.8" y2="237.8" stroke="#000" stroke-width="2.2"/><line x1="457.6" y1="152.2" x2="457.6" y2="237.8" stroke="#000" stroke-width="2.2"/><line x1="491.1" y1="152.2" x2="491.1" y2="237.8" stroke="#000" stroke-width="2.2"/><line x1="525.9" y1="152.2" x2="525.9" y2="237.8" stroke="#000" stroke-width="3.2"/><line x1="529.7" y1="152.2" x2="529.7" y2="237.8" stroke="#000" stroke-width="1.6"/><line x1="535.5" y1="152.2" x2="535.5" y2="237.8" stroke="#000" stroke-width="1.6"/><line x1="540.3" y1="152.2" x2="540.3" y2="237.8" stroke="#000" stroke-width="2"/><line x1="239.5" y1="194.9" x2="541" y2="194.9" stroke="#0A18F0" stroke-width="2.2"/><line x1="239.5" y1="162.3" x2="250" y2="162.3" stroke="#000" stroke-width="0.9"/><line x1="530" y1="162.3" x2="540.5" y2="162.3" stroke="#000" stroke-width="0.9"/><path d="M242 154.2 L244.5 161.3 M245.5 154.2 L249 161.3" stroke="#555" stroke-width="0.9" fill="none"/><path d="M531 161.3 L535.5 154.2 M539 161.3 L536.5 154.2" stroke="#555" stroke-width="0.9" fill="none"/><line x1="239.5" y1="183.7" x2="250" y2="183.7" stroke="#000" stroke-width="0.9"/><line x1="530" y1="183.7" x2="540.5" y2="183.7" stroke="#000" stroke-width="0.9"/><path d="M242 175.4 L244.5 182.7 M245.5 175.4 L249 182.7" stroke="#555" stroke-width="0.9" fill="none"/><path d="M531 182.7 L535.5 175.4 M539 182.7 L536.5 175.4" stroke="#555" stroke-width="0.9" fill="none"/><line x1="239.5" y1="205.3" x2="250" y2="205.3" stroke="#000" stroke-width="0.9"/><line x1="530" y1="205.3" x2="540.5" y2="205.3" stroke="#000" stroke-width="0.9"/><path d="M242 196.9 L244.5 204.3 M245.5 196.9 L249 204.3" stroke="#555" stroke-width="0.9" fill="none"/><path d="M531 204.3 L535.5 196.9 M539 204.3 L536.5 196.9" stroke="#555" stroke-width="0.9" fill="none"/><line x1="239.5" y1="226.8" x2="250" y2="226.8" stroke="#000" stroke-width="0.9"/><line x1="530" y1="226.8" x2="540.5" y2="226.8" stroke="#000" stroke-width="0.9"/><path d="M242 218.7 L244.5 225.8 M245.5 218.7 L249 225.8" stroke="#555" stroke-width="0.9" fill="none"/><path d="M531 225.8 L535.5 218.7 M539 225.8 L536.5 218.7" stroke="#555" stroke-width="0.9" fill="none"/><circle cx="240.6" cy="152.2" r="2" fill="#000"/><circle cx="244.3" cy="152.2" r="2" fill="#000"/><circle cx="249.6" cy="152.2" r="2" fill="#000"/><circle cx="254.5" cy="152.2" r="2" fill="#000"/><circle cx="288.8" cy="152.2" r="2" fill="#000"/><circle cx="323.05" cy="152.2" r="2" fill="#000"/><circle cx="356.2" cy="152.2" r="2" fill="#000"/><circle cx="390.2" cy="152.2" r="2" fill="#000"/><circle cx="423.8" cy="152.2" r="2" fill="#000"/><circle cx="457.6" cy="152.2" r="2" fill="#000"/><circle cx="491.1" cy="152.2" r="2" fill="#000"/><circle cx="525.9" cy="152.2" r="2" fill="#000"/><circle cx="529.7" cy="152.2" r="2" fill="#000"/><circle cx="535.5" cy="152.2" r="2" fill="#000"/><circle cx="540.3" cy="152.2" r="2" fill="#000"/><circle cx="240.6" cy="173.4" r="2" fill="#000"/><circle cx="244.3" cy="173.4" r="2" fill="#000"/><circle cx="249.6" cy="173.4" r="2" fill="#000"/><circle cx="254.5" cy="173.4" r="2" fill="#000"/><circle cx="288.8" cy="173.4" r="2" fill="#000"/><circle cx="323.05" cy="173.4" r="2" fill="#000"/><circle cx="356.2" cy="173.4" r="2" fill="#000"/><circle cx="390.2" cy="173.4" r="2" fill="#000"/><circle cx="423.8" cy="173.4" r="2" fill="#000"/><circle cx="457.6" cy="173.4" r="2" fill="#000"/><circle cx="491.1" cy="173.4" r="2" fill="#000"/><circle cx="525.9" cy="173.4" r="2" fill="#000"/><circle cx="529.7" cy="173.4" r="2" fill="#000"/><circle cx="535.5" cy="173.4" r="2" fill="#000"/><circle cx="540.3" cy="173.4" r="2" fill="#000"/><circle cx="240.6" cy="194.9" r="2" fill="#0A18F0"/><circle cx="244.3" cy="194.9" r="2" fill="#0A18F0"/><circle cx="249.6" cy="194.9" r="2" fill="#0A18F0"/><circle cx="254.5" cy="194.9" r="2" fill="#0A18F0"/><circle cx="288.8" cy="194.9" r="2" fill="#0A18F0"/><circle cx="323.05" cy="194.9" r="2" fill="#0A18F0"/><circle cx="356.2" cy="194.9" r="2" fill="#0A18F0"/><circle cx="390.2" cy="194.9" r="2" fill="#0A18F0"/><circle cx="423.8" cy="194.9" r="2" fill="#0A18F0"/><circle cx="457.6" cy="194.9" r="2" fill="#0A18F0"/><circle cx="491.1" cy="194.9" r="2" fill="#0A18F0"/><circle cx="525.9" cy="194.9" r="2" fill="#0A18F0"/><circle cx="529.7" cy="194.9" r="2" fill="#0A18F0"/><circle cx="535.5" cy="194.9" r="2" fill="#0A18F0"/><circle cx="540.3" cy="194.9" r="2" fill="#0A18F0"/><circle cx="240.6" cy="216.7" r="2" fill="#000"/><circle cx="244.3" cy="216.7" r="2" fill="#000"/><circle cx="249.6" cy="216.7" r="2" fill="#000"/><circle cx="254.5" cy="216.7" r="2" fill="#000"/><circle cx="288.8" cy="216.7" r="2" fill="#000"/><circle cx="323.05" cy="216.7" r="2" fill="#000"/><circle cx="356.2" cy="216.7" r="2" fill="#000"/><circle cx="390.2" cy="216.7" r="2" fill="#000"/><circle cx="423.8" cy="216.7" r="2" fill="#000"/><circle cx="457.6" cy="216.7" r="2" fill="#000"/><circle cx="491.1" cy="216.7" r="2" fill="#000"/><circle cx="525.9" cy="216.7" r="2" fill="#000"/><circle cx="529.7" cy="216.7" r="2" fill="#000"/><circle cx="535.5" cy="216.7" r="2" fill="#000"/><circle cx="540.3" cy="216.7" r="2" fill="#000"/><circle cx="240.6" cy="237.8" r="2" fill="#000"/><circle cx="244.3" cy="237.8" r="2" fill="#000"/><circle cx="249.6" cy="237.8" r="2" fill="#000"/><circle cx="254.5" cy="237.8" r="2" fill="#000"/><circle cx="288.8" cy="237.8" r="2" fill="#000"/><circle cx="323.05" cy="237.8" r="2" fill="#000"/><circle cx="356.2" cy="237.8" r="2" fill="#000"/><circle cx="390.2" cy="237.8" r="2" fill="#000"/><circle cx="423.8" cy="237.8" r="2" fill="#000"/><circle cx="457.6" cy="237.8" r="2" fill="#000"/><circle cx="491.1" cy="237.8" r="2" fill="#000"/><circle cx="525.9" cy="237.8" r="2" fill="#000"/><circle cx="529.7" cy="237.8" r="2" fill="#000"/><circle cx="535.5" cy="237.8" r="2" fill="#000"/><circle cx="540.3" cy="237.8" r="2" fill="#000"/><path d="M244.4 240.5 L239.5 248.3 L249.5 248.3 Z" fill="#fff" stroke="#000" stroke-width="1"/><path d="M535.6 240.5 L530.7 248.3 L540.7 248.3 Z" fill="#fff" stroke="#000" stroke-width="1"/><path d="M323.8 184 V207 M324.2 188 Q327 190 325 192.5 M324.2 199 Q327 201 325 203.5 M322 193 L325 195.5 L322 198.5" stroke="#0A18F0" stroke-width="1.4" fill="none"/></svg>
<div style="left:576px;top:67px;width:4px;height:271px;background:#ECE9D8;border-left:1px solid #fff;"></div>
<div style="left:580px;top:68px;width:266px;height:153px;background:#fff;"></div>
<div style="left:846px;top:68px;width:1px;height:270px;background:#8C8A7C;"></div>
<div class="t" style="left:581.40px;top:69.98px;font-family:'Liberation Sans',sans-serif;font-size:9px;color:#111;transform:scaleX(0.9917);transform-origin:0 0;">【断面】</div>
<div class="t" style="left:614.00px;top:70.68px;font-family:'Liberation Sans',sans-serif;font-size:9px;color:#111;transform:scaleX(0.8962);transform-origin:0 0;">断面番号:4</div>
<div class="t" style="left:668.00px;top:70.68px;font-family:'Liberation Sans',sans-serif;font-size:9px;color:#111;transform:scaleX(0.9261);transform-origin:0 0;">部材:</div>
<div style="left:690px;top:70px;width:53px;height:13px;background:#fff;border-top:1px solid #808080;border-left:1px solid #808080;border-bottom:1px solid #F0F0F0;border-right:1px solid #F0F0F0;"></div>
<div class="t" style="left:692.40px;top:72.08px;font-family:'Liberation Sans',sans-serif;font-size:8.8px;color:#111;transform:scaleX(1.0224);transform-origin:0 0;">39-i</div>
<div style="left:731px;top:71px;width:11px;height:11px;background:#ECE9D8;border-top:1px solid #fff;border-left:1px solid #fff;border-right:1px solid #716F64;border-bottom:1px solid #716F64;"></div>
<svg style="left:733px;top:74px" width="7" height="4" viewBox="0 0 7 4"><path d="M0.5 0.5 H6.5 L3.5 3.5 Z" fill="#000"/></svg>
<svg style="left:580px;top:67px" width="267" height="155" viewBox="580 67 267 155"><path d="M668 99 H760 V111.2 H741.7 L724 117 V208.3 H704 V117 L686 111.2 H668 Z" fill="#fff" stroke="#000" stroke-width="1.8" stroke-linejoin="round"/></svg>
<div style="left:580px;top:221px;width:266px;height:4px;background:#D8D4C6;"></div>
<div style="left:580px;top:222px;width:266px;height:1px;background:#F2F0E8;"></div>
<div style="left:580px;top:225px;width:266px;height:112px;background:#fff;"></div>
<div style="left:580px;top:337px;width:267px;height:1px;background:#A8A494;"></div>
<div class="t" style="left:578.50px;top:226.18px;font-family:'Liberation Sans',sans-serif;font-size:9px;color:#111;transform:scaleX(0.9630);transform-origin:0 0;">【側面形状】</div>
<div class="t" style="left:635.20px;top:226.18px;font-family:'Liberation Sans',sans-serif;font-size:9px;color:#111;transform:scaleX(0.8125);transform-origin:0 0;">Group3</div>
<div class="t" style="left:670.20px;top:226.18px;font-family:'Liberation Sans',sans-serif;font-size:9px;color:#111;transform:scaleX(0.8779);transform-origin:0 0;">ケーブル名:主桁No3</div>
<svg style="left:0px;top:0px" width="850" height="340" viewBox="0 0 850 340"><rect x="607" y="281.2" width="214" height="6" fill="#087A7A"/><rect x="607" y="287" width="214" height="7" fill="#0A8686"/><line x1="607" y1="281.5" x2="821" y2="281.5" stroke="#90B8E8" stroke-width="0.8"/><line x1="607" y1="294.3" x2="821" y2="294.3" stroke="#B8F0F0" stroke-width="0.6"/><path d="M608 283.2 L625 284.6 L645 286.4 L666 288.7 M762 288.7 L783 286.4 L803 284.6 L820 283.2" fill="none" stroke="#C81414" stroke-width="1.1" stroke-dasharray="5 1.2"/><path d="M608 286.4 L632 286.6 M628 288.8 L668 289 M760 289 L800 288.8 M796 286.6 L820 286.4" fill="none" stroke="#C81414" stroke-width="1" stroke-dasharray="4 1.5"/><path d="M608 290.3 L700 290.3 M728 290.3 L820 290.3" fill="none" stroke="#C81414" stroke-width="1" stroke-dasharray="1.6 1.4"/><path d="M608 292.6 L820 292.6" fill="none" stroke="#B81818" stroke-width="1.5"/><line x1="604" y1="287.7" x2="822.5" y2="287.7" stroke="#000" stroke-width="2.4"/><circle cx="604.5" cy="287.7" r="1.8" fill="#000"/><circle cx="665.6" cy="287.7" r="1.8" fill="#000"/><circle cx="689.3" cy="287.7" r="1.8" fill="#000"/><circle cx="713.6" cy="287.7" r="1.8" fill="#000"/><circle cx="737.5" cy="287.7" r="1.8" fill="#000"/><circle cx="761.5" cy="287.7" r="1.8" fill="#000"/><circle cx="822" cy="287.7" r="1.8" fill="#000"/></svg>
<div style="left:180px;top:339px;width:670px;height:1px;background:#fff;"></div>
<div style="left:180px;top:341px;width:667px;height:1px;background:#B8B4A4;"></div>
<svg style="left:194px;top:355px" width="11" height="13" viewBox="0 0 11 13">
<path d="M2.3 4.2 Q2.3 1.2 5.5 1.2 Q8.7 1.2 8.7 3.8 Q8.7 5.4 6.6 6.4 Q5.5 7 5.5 8.6" fill="none" stroke="#333" stroke-width="1.5"/><circle cx="5.5" cy="10.8" r="1.3" fill="none" stroke="#333" stroke-width="1.1"/>
</svg>
<div style="left:211px;top:353px;width:40px;height:16px;background:#ECE9D8;border-top:1px solid #fff;border-left:1px solid #fff;border-right:1px solid #716F64;border-bottom:1px solid #716F64;box-shadow:inset -1px -1px 0 #ACA899;"></div>
<div class="t" style="left:217.00px;top:356.44px;font-family:'Liberation Sans',sans-serif;font-size:9.5px;color:#111;transform:scaleX(0.6250);transform-origin:0 0;">フォント</div>
<div style="left:255px;top:353px;width:40px;height:16px;background:#ECE9D8;border-top:1px solid #fff;border-left:1px solid #fff;border-right:1px solid #716F64;border-bottom:1px solid #716F64;box-shadow:inset -1px -1px 0 #ACA899;"></div>
<div class="t" style="left:266.00px;top:356.44px;font-family:'Liberation Sans',sans-serif;font-size:9.5px;color:#111;transform:scaleX(0.8500);transform-origin:0 0;">出力</div>
<div style="left:299px;top:353px;width:49px;height:16px;background:#ECE9D8;border-top:1px solid #fff;border-left:1px solid #fff;border-right:1px solid #716F64;border-bottom:1px solid #716F64;box-shadow:inset -1px -1px 0 #ACA899;"></div>
<div class="t" style="left:301.40px;top:356.44px;font-family:'Liberation Sans',sans-serif;font-size:9.5px;color:#111;transform:scaleX(0.6933);transform-origin:0 0;">印刷フォント</div>
<div class="t" style="left:187.00px;top:381.44px;font-family:'Liberation Sans',sans-serif;font-size:9.5px;color:#222;transform:scaleX(0.7500);transform-origin:0 0;">グループ</div>
<div style="left:221px;top:380px;width:66px;height:13px;background:#fff;border-top:1px solid #808080;border-left:1px solid #808080;border-right:1px solid #fff;border-bottom:1px solid #fff;"></div>
<div class="t" style="left:223.00px;top:382.18px;font-family:'Liberation Sans',sans-serif;font-size:9px;color:#111;transform:scaleX(0.7681);transform-origin:0 0;">GROUP 1</div>
<div style="left:274px;top:381px;width:12px;height:11px;background:#ECE9D8;border-top:1px solid #fff;border-left:1px solid #fff;border-right:1px solid #716F64;border-bottom:1px solid #716F64;"></div>
<svg style="left:277px;top:385px" width="7" height="4" viewBox="0 0 7 4"><path d="M0.5 0.5 H6.5 L3.5 3.5 Z" fill="#000"/></svg>
<div style="left:287px;top:380px;width:12px;height:13px;background:#ECE9D8;border-top:1px solid #fff;border-left:1px solid #fff;border-right:1px solid #716F64;border-bottom:1px solid #716F64;"></div>
<div style="left:288px;top:386px;width:10px;height:1px;background:#ACA899;"></div>
<svg style="left:290px;top:381px" width="6" height="12" viewBox="0 0 6 12"><path d="M1 3.5 L3 1.5 L5 3.5 Z M1 8.5 L3 10.5 L5 8.5 Z" fill="#000"/></svg>
<div class="t" style="left:194.50px;top:399.76px;font-family:'Liberation Sans',sans-serif;font-size:10.5px;color:#108888;transform:scaleX(0.8939);transform-origin:0 0;">前項目</div>
<div class="t" style="left:237.00px;top:399.76px;font-family:'Liberation Sans',sans-serif;font-size:10.5px;color:#1010E8;transform:scaleX(0.9606);transform-origin:0 0;">次項目</div>
<div style="left:237px;top:410px;width:32px;height:1px;background:#1010E8;"></div>
<div class="t" style="left:280.00px;top:399.76px;font-family:'Liberation Sans',sans-serif;font-size:10.5px;color:#1010E8;transform:scaleX(0.9455);transform-origin:0 0;">全体表示</div>
<div style="left:280px;top:410px;width:42px;height:1px;background:#1010E8;"></div>
<div style="left:195px;top:429px;width:7px;height:7px;background:#111;"></div>
<div class="t" style="left:205.00px;top:428.35px;font-family:'Liberation Mono',monospace;font-size:11.5px;color:#111;transform:scaleX(0.8340);transform-origin:0 0;">Group1(<span style="font-size:88%">主桁</span>No1)</div>
<div class="t" style="left:195.80px;top:438.35px;font-family:'Liberation Mono',monospace;font-size:11.5px;color:#111;transform:scaleX(0.8944);transform-origin:0 0;"><span style="font-size:88%">座標系：原点</span>(-0.4000,5.3400)<span style="font-size:88%">、傾き</span>(0.0000) <span style="font-size:88%">適用部材：</span>1<span style="font-size:88%">～</span>16</div>
<div class="t" style="left:194.50px;top:457.14px;font-family:'Liberation Mono',monospace;font-size:11.5px;color:#111;transform:scaleX(0.7830);transform-origin:0 0;">CABLE No.1(1.000<span style="font-size:88%">本</span>)</div>
<div style="left:195px;top:477px;width:359px;height:141px;border-top:1px solid #fff;border-left:1px solid #fff;border-right:1px solid #ACA899;border-bottom:1px solid #ACA899;"></div>
<div style="left:196px;top:478px;width:30px;height:27px;background:#ECE9D8;border-top:1px solid #ACA899;border-left:1px solid #ACA899;border-right:1px solid #fff;border-bottom:1px solid #fff;"></div>
<div class="t" style="left:200.40px;top:482.43px;font-family:'Liberation Mono',monospace;font-size:11px;color:#1a1a1a;transform:scaleX(1.0500);transform-origin:0 0;"><span style="font-size:88%">区間</span></div>
<div class="t" style="left:203.50px;top:492.83px;font-family:'Liberation Mono',monospace;font-size:11px;color:#1a1a1a;transform:scaleX(0.7571);transform-origin:0 0;">No.</div>
<div style="left:227px;top:478px;width:51px;height:27px;background:#ECE9D8;border-top:1px solid #ACA899;border-left:1px solid #ACA899;border-right:1px solid #fff;border-bottom:1px solid #fff;"></div>
<div class="t" style="left:236.40px;top:482.43px;font-family:'Liberation Mono',monospace;font-size:11px;color:#1a1a1a;transform:scaleX(1.0233);transform-origin:0 0;"><span style="font-size:88%">水平長</span></div>
<div class="t" style="left:238.50px;top:492.83px;font-family:'Liberation Mono',monospace;font-size:11px;color:#1a1a1a;transform:scaleX(0.7724);transform-origin:0 0;">BL(m)</div>
<div style="left:279px;top:478px;width:40px;height:27px;background:#ECE9D8;border-top:1px solid #ACA899;border-left:1px solid #ACA899;border-right:1px solid #fff;border-bottom:1px solid #fff;"></div>
<div class="t" style="left:288.30px;top:482.43px;font-family:'Liberation Mono',monospace;font-size:11px;color:#1a1a1a;transform:scaleX(1.0500);transform-origin:0 0;"><span style="font-size:88%">高さ</span></div>
<div class="t" style="left:285.00px;top:492.83px;font-family:'Liberation Mono',monospace;font-size:11px;color:#1a1a1a;transform:scaleX(0.8312);transform-origin:0 0;"><span style="font-size:88%">⊿</span>h(m)</div>
<div style="left:320px;top:478px;width:51px;height:27px;background:#ECE9D8;border-top:1px solid #ACA899;border-left:1px solid #ACA899;border-right:1px solid #fff;border-bottom:1px solid #fff;"></div>
<div class="t" style="left:329.60px;top:482.43px;font-family:'Liberation Mono',monospace;font-size:11px;color:#1a1a1a;transform:scaleX(1.0233);transform-origin:0 0;"><span style="font-size:88%">曲線長</span></div>
<div class="t" style="left:331.70px;top:492.83px;font-family:'Liberation Mono',monospace;font-size:11px;color:#1a1a1a;transform:scaleX(0.8027);transform-origin:0 0;">CL(m)</div>
<div style="left:372px;top:478px;width:40px;height:27px;background:#ECE9D8;border-top:1px solid #ACA899;border-left:1px solid #ACA899;border-right:1px solid #fff;border-bottom:1px solid #fff;"></div>
<div class="t" style="left:381.20px;top:482.43px;font-family:'Liberation Mono',monospace;font-size:11px;color:#1a1a1a;transform:scaleX(1.0000);transform-origin:0 0;"><span style="font-size:88%">角度</span></div>
<div class="t" style="left:377.80px;top:492.83px;font-family:'Liberation Mono',monospace;font-size:11px;color:#1a1a1a;transform:scaleX(0.9727);transform-origin:0 0;">θ(<span style="font-size:88%">度</span>)</div>
<div style="left:413px;top:478px;width:40px;height:27px;background:#ECE9D8;border-top:1px solid #ACA899;border-left:1px solid #ACA899;border-right:1px solid #fff;border-bottom:1px solid #fff;"></div>
<div class="t" style="left:422.50px;top:482.43px;font-family:'Liberation Mono',monospace;font-size:11px;color:#1a1a1a;transform:scaleX(1.0000);transform-origin:0 0;"><span style="font-size:88%">半径</span></div>
<div class="t" style="left:422.50px;top:492.83px;font-family:'Liberation Mono',monospace;font-size:11px;color:#1a1a1a;transform:scaleX(0.7574);transform-origin:0 0;">R(m)</div>
<div style="left:454px;top:478px;width:99px;height:13px;background:#ECE9D8;border-top:1px solid #ACA899;border-left:1px solid #ACA899;border-right:1px solid #fff;border-bottom:1px solid #fff;"></div>
<div class="t" style="left:456.00px;top:480.73px;font-family:'Liberation Mono',monospace;font-size:11px;color:#1a1a1a;transform:scaleX(0.9749);transform-origin:0 0;">IP<span style="font-size:88%">点座標</span>(<span style="font-size:88%">桁端ヨリ</span>)</div>
<div style="left:454px;top:492px;width:49px;height:13px;background:#ECE9D8;border-top:1px solid #ACA899;border-left:1px solid #ACA899;border-right:1px solid #fff;border-bottom:1px solid #fff;"></div>
<div class="t" style="left:467.20px;top:493.83px;font-family:'Liberation Mono',monospace;font-size:11px;color:#1a1a1a;transform:scaleX(0.7953);transform-origin:0 0;">X(m)</div>
<div style="left:504px;top:492px;width:49px;height:13px;background:#ECE9D8;border-top:1px solid #ACA899;border-left:1px solid #ACA899;border-right:1px solid #fff;border-bottom:1px solid #fff;"></div>
<div class="t" style="left:517.50px;top:493.83px;font-family:'Liberation Mono',monospace;font-size:11px;color:#1a1a1a;transform:scaleX(0.7574);transform-origin:0 0;">Y(m)</div>
<div style="left:196px;top:506px;width:30px;height:13px;background:#ECE9D8;border-top:1px solid #ACA899;border-left:1px solid #ACA899;border-right:1px solid #fff;border-bottom:1px solid #fff;"></div>
<div class="t" style="right:626.50px;top:508.53px;font-family:'Liberation Mono',monospace;font-size:11px;color:#1a1a1a;transform:scaleX(0.9700);transform-origin:100% 0;"><span style="font-size:88%">始点</span></div>
<div style="left:227px;top:506px;width:51px;height:13px;background:#ECE9D8;border-top:1px solid #ACA899;border-left:1px solid #ACA899;border-right:1px solid #fff;border-bottom:1px solid #fff;"></div>
<div style="left:240.0px;top:511.4px;width:34.3px;height:1.6px;background-image:linear-gradient(90deg,#333 1.6px,transparent 1.6px);background-size:5.45px 1.6px;"></div>
<div style="left:279px;top:506px;width:40px;height:13px;background:#ECE9D8;border-top:1px solid #ACA899;border-left:1px solid #ACA899;border-right:1px solid #fff;border-bottom:1px solid #fff;"></div>
<div style="left:281.0px;top:511.4px;width:34.3px;height:1.6px;background-image:linear-gradient(90deg,#333 1.6px,transparent 1.6px);background-size:5.45px 1.6px;"></div>
<div style="left:320px;top:506px;width:51px;height:13px;background:#ECE9D8;border-top:1px solid #ACA899;border-left:1px solid #ACA899;border-right:1px solid #fff;border-bottom:1px solid #fff;"></div>
<div style="left:333.0px;top:511.4px;width:34.3px;height:1.6px;background-image:linear-gradient(90deg,#333 1.6px,transparent 1.6px);background-size:5.45px 1.6px;"></div>
<div style="left:372px;top:506px;width:40px;height:13px;background:#ECE9D8;border-top:1px solid #ACA899;border-left:1px solid #ACA899;border-right:1px solid #fff;border-bottom:1px solid #fff;"></div>
<div style="left:374.0px;top:511.4px;width:34.3px;height:1.6px;background-image:linear-gradient(90deg,#333 1.6px,transparent 1.6px);background-size:5.45px 1.6px;"></div>
<div style="left:413px;top:506px;width:40px;height:13px;background:#ECE9D8;border-top:1px solid #ACA899;border-left:1px solid #ACA899;border-right:1px solid #fff;border-bottom:1px solid #fff;"></div>
<div style="left:415.0px;top:511.4px;width:34.3px;height:1.6px;background-image:linear-gradient(90deg,#333 1.6px,transparent 1.6px);background-size:5.45px 1.6px;"></div>
<div style="left:454px;top:506px;width:49px;height:13px;background:#ECE9D8;border-top:1px solid #ACA899;border-left:1px solid #ACA899;border-right:1px solid #fff;border-bottom:1px solid #fff;"></div>
<div class="t" style="right:348.40px;top:508.23px;font-family:'Liberation Mono',monospace;font-size:11px;color:#1a1a1a;transform:scaleX(0.8258);transform-origin:100% 0;">0.150</div>
<div style="left:504px;top:506px;width:49px;height:13px;background:#ECE9D8;border-top:1px solid #ACA899;border-left:1px solid #ACA899;border-right:1px solid #fff;border-bottom:1px solid #fff;"></div>
<div class="t" style="right:298.40px;top:508.23px;font-family:'Liberation Mono',monospace;font-size:11px;color:#1a1a1a;transform:scaleX(0.8258);transform-origin:100% 0;">0.275</div>
<div style="left:196px;top:520px;width:30px;height:13px;background:#ECE9D8;border-top:1px solid #ACA899;border-left:1px solid #ACA899;border-right:1px solid #fff;border-bottom:1px solid #fff;"></div>
<div style="left:227px;top:520px;width:51px;height:13px;background:#ECE9D8;border-top:1px solid #ACA899;border-left:1px solid #ACA899;border-right:1px solid #fff;border-bottom:1px solid #fff;"></div>
<div class="t" style="right:573.40px;top:522.23px;font-family:'Liberation Mono',monospace;font-size:11px;color:#1a1a1a;transform:scaleX(0.8258);transform-origin:100% 0;">12.556</div>
<div style="left:279px;top:520px;width:40px;height:13px;background:#ECE9D8;border-top:1px solid #ACA899;border-left:1px solid #ACA899;border-right:1px solid #fff;border-bottom:1px solid #fff;"></div>
<div class="t" style="right:532.40px;top:522.23px;font-family:'Liberation Mono',monospace;font-size:11px;color:#1a1a1a;transform:scaleX(0.8258);transform-origin:100% 0;">1.246</div>
<div style="left:320px;top:520px;width:51px;height:13px;background:#ECE9D8;border-top:1px solid #ACA899;border-left:1px solid #ACA899;border-right:1px solid #fff;border-bottom:1px solid #fff;"></div>
<div class="t" style="right:480.40px;top:522.23px;font-family:'Liberation Mono',monospace;font-size:11px;color:#1a1a1a;transform:scaleX(0.8258);transform-origin:100% 0;">12.617</div>
<div style="left:372px;top:520px;width:40px;height:13px;background:#ECE9D8;border-top:1px solid #ACA899;border-left:1px solid #ACA899;border-right:1px solid #fff;border-bottom:1px solid #fff;"></div>
<div class="t" style="right:439.40px;top:522.23px;font-family:'Liberation Mono',monospace;font-size:11px;color:#1a1a1a;transform:scaleX(0.8258);transform-origin:100% 0;">5.668</div>
<div style="left:413px;top:520px;width:40px;height:13px;background:#ECE9D8;border-top:1px solid #ACA899;border-left:1px solid #ACA899;border-right:1px solid #fff;border-bottom:1px solid #fff;"></div>
<div style="left:415.0px;top:525.4px;width:34.3px;height:1.6px;background-image:linear-gradient(90deg,#333 1.6px,transparent 1.6px);background-size:5.45px 1.6px;"></div>
<div style="left:454px;top:520px;width:49px;height:13px;background:#ECE9D8;border-top:1px solid #ACA899;border-left:1px solid #ACA899;border-right:1px solid #fff;border-bottom:1px solid #fff;"></div>
<div style="left:465.0px;top:525.4px;width:34.3px;height:1.6px;background-image:linear-gradient(90deg,#333 1.6px,transparent 1.6px);background-size:5.45px 1.6px;"></div>
<div style="left:504px;top:520px;width:49px;height:13px;background:#ECE9D8;border-top:1px solid #ACA899;border-left:1px solid #ACA899;border-right:1px solid #fff;border-bottom:1px solid #fff;"></div>
<div style="left:515.0px;top:525.4px;width:34.3px;height:1.6px;background-image:linear-gradient(90deg,#333 1.6px,transparent 1.6px);background-size:5.45px 1.6px;"></div>
<div style="left:196px;top:534px;width:30px;height:13px;background:#ECE9D8;border-top:1px solid #ACA899;border-left:1px solid #ACA899;border-right:1px solid #fff;border-bottom:1px solid #fff;"></div>
<div class="t" style="right:625.40px;top:536.23px;font-family:'Liberation Mono',monospace;font-size:11px;color:#1a1a1a;transform:scaleX(0.8258);transform-origin:100% 0;">1</div>
<div style="left:227px;top:534px;width:51px;height:13px;background:#ECE9D8;border-top:1px solid #ACA899;border-left:1px solid #ACA899;border-right:1px solid #fff;border-bottom:1px solid #fff;"></div>
<div class="t" style="right:573.40px;top:536.23px;font-family:'Liberation Mono',monospace;font-size:11px;color:#1a1a1a;transform:scaleX(0.8258);transform-origin:100% 0;">1.392</div>
<div style="left:279px;top:534px;width:40px;height:13px;background:#ECE9D8;border-top:1px solid #ACA899;border-left:1px solid #ACA899;border-right:1px solid #fff;border-bottom:1px solid #fff;"></div>
<div class="t" style="right:532.40px;top:536.23px;font-family:'Liberation Mono',monospace;font-size:11px;color:#1a1a1a;transform:scaleX(0.8258);transform-origin:100% 0;">0.069</div>
<div style="left:320px;top:534px;width:51px;height:13px;background:#ECE9D8;border-top:1px solid #ACA899;border-left:1px solid #ACA899;border-right:1px solid #fff;border-bottom:1px solid #fff;"></div>
<div class="t" style="right:480.40px;top:536.23px;font-family:'Liberation Mono',monospace;font-size:11px;color:#1a1a1a;transform:scaleX(0.8258);transform-origin:100% 0;">1.394</div>
<div style="left:372px;top:534px;width:40px;height:13px;background:#ECE9D8;border-top:1px solid #ACA899;border-left:1px solid #ACA899;border-right:1px solid #fff;border-bottom:1px solid #fff;"></div>
<div style="left:374.0px;top:539.4px;width:34.3px;height:1.6px;background-image:linear-gradient(90deg,#333 1.6px,transparent 1.6px);background-size:5.45px 1.6px;"></div>
<div style="left:413px;top:534px;width:40px;height:13px;background:#ECE9D8;border-top:1px solid #ACA899;border-left:1px solid #ACA899;border-right:1px solid #fff;border-bottom:1px solid #fff;"></div>
<div class="t" style="right:398.40px;top:536.23px;font-family:'Liberation Mono',monospace;font-size:11px;color:#1a1a1a;transform:scaleX(0.8258);transform-origin:100% 0;">14.094</div>
<div style="left:454px;top:534px;width:49px;height:13px;background:#ECE9D8;border-top:1px solid #ACA899;border-left:1px solid #ACA899;border-right:1px solid #fff;border-bottom:1px solid #fff;"></div>
<div class="t" style="right:348.40px;top:536.23px;font-family:'Liberation Mono',monospace;font-size:11px;color:#1a1a1a;transform:scaleX(0.8258);transform-origin:100% 0;">13.400</div>
<div style="left:504px;top:534px;width:49px;height:13px;background:#ECE9D8;border-top:1px solid #ACA899;border-left:1px solid #ACA899;border-right:1px solid #fff;border-bottom:1px solid #fff;"></div>
<div class="t" style="right:298.40px;top:536.23px;font-family:'Liberation Mono',monospace;font-size:11px;color:#1a1a1a;transform:scaleX(0.8258);transform-origin:100% 0;">1.590</div>
<div style="left:196px;top:548px;width:30px;height:13px;background:#ECE9D8;border-top:1px solid #ACA899;border-left:1px solid #ACA899;border-right:1px solid #fff;border-bottom:1px solid #fff;"></div>
<div style="left:227px;top:548px;width:51px;height:13px;background:#ECE9D8;border-top:1px solid #ACA899;border-left:1px solid #ACA899;border-right:1px solid #fff;border-bottom:1px solid #fff;"></div>
<div class="t" style="right:573.40px;top:550.23px;font-family:'Liberation Mono',monospace;font-size:11px;color:#1a1a1a;transform:scaleX(0.8258);transform-origin:100% 0;">2.605</div>
<div style="left:279px;top:548px;width:40px;height:13px;background:#ECE9D8;border-top:1px solid #ACA899;border-left:1px solid #ACA899;border-right:1px solid #fff;border-bottom:1px solid #fff;"></div>
<div class="t" style="right:532.40px;top:550.23px;font-family:'Liberation Mono',monospace;font-size:11px;color:#1a1a1a;transform:scaleX(0.8258);transform-origin:100% 0;">0.000</div>
<div style="left:320px;top:548px;width:51px;height:13px;background:#ECE9D8;border-top:1px solid #ACA899;border-left:1px solid #ACA899;border-right:1px solid #fff;border-bottom:1px solid #fff;"></div>
<div class="t" style="right:480.40px;top:550.23px;font-family:'Liberation Mono',monospace;font-size:11px;color:#1a1a1a;transform:scaleX(0.8258);transform-origin:100% 0;">2.605</div>
<div style="left:372px;top:548px;width:40px;height:13px;background:#ECE9D8;border-top:1px solid #ACA899;border-left:1px solid #ACA899;border-right:1px solid #fff;border-bottom:1px solid #fff;"></div>
<div class="t" style="right:439.40px;top:550.23px;font-family:'Liberation Mono',monospace;font-size:11px;color:#1a1a1a;transform:scaleX(0.8258);transform-origin:100% 0;">0.000</div>
<div style="left:413px;top:548px;width:40px;height:13px;background:#ECE9D8;border-top:1px solid #ACA899;border-left:1px solid #ACA899;border-right:1px solid #fff;border-bottom:1px solid #fff;"></div>
<div style="left:415.0px;top:553.4px;width:34.3px;height:1.6px;background-image:linear-gradient(90deg,#333 1.6px,transparent 1.6px);background-size:5.45px 1.6px;"></div>
<div style="left:454px;top:548px;width:49px;height:13px;background:#ECE9D8;border-top:1px solid #ACA899;border-left:1px solid #ACA899;border-right:1px solid #fff;border-bottom:1px solid #fff;"></div>
<div style="left:465.0px;top:553.4px;width:34.3px;height:1.6px;background-image:linear-gradient(90deg,#333 1.6px,transparent 1.6px);background-size:5.45px 1.6px;"></div>
<div style="left:504px;top:548px;width:49px;height:13px;background:#ECE9D8;border-top:1px solid #ACA899;border-left:1px solid #ACA899;border-right:1px solid #fff;border-bottom:1px solid #fff;"></div>
<div style="left:515.0px;top:553.4px;width:34.3px;height:1.6px;background-image:linear-gradient(90deg,#333 1.6px,transparent 1.6px);background-size:5.45px 1.6px;"></div>
<div style="left:196px;top:561px;width:30px;height:13px;background:#ECE9D8;border-top:1px solid #ACA899;border-left:1px solid #ACA899;border-right:1px solid #fff;border-bottom:1px solid #fff;"></div>
<div class="t" style="right:625.40px;top:563.23px;font-family:'Liberation Mono',monospace;font-size:11px;color:#1a1a1a;transform:scaleX(0.8258);transform-origin:100% 0;">2</div>
<div style="left:227px;top:561px;width:51px;height:13px;background:#ECE9D8;border-top:1px solid #ACA899;border-left:1px solid #ACA899;border-right:1px solid #fff;border-bottom:1px solid #fff;"></div>
<div class="t" style="right:573.40px;top:563.23px;font-family:'Liberation Mono',monospace;font-size:11px;color:#1a1a1a;transform:scaleX(0.8258);transform-origin:100% 0;">1.392</div>
<div style="left:279px;top:561px;width:40px;height:13px;background:#ECE9D8;border-top:1px solid #ACA899;border-left:1px solid #ACA899;border-right:1px solid #fff;border-bottom:1px solid #fff;"></div>
<div class="t" style="right:532.40px;top:563.23px;font-family:'Liberation Mono',monospace;font-size:11px;color:#1a1a1a;transform:scaleX(0.8258);transform-origin:100% 0;">0.069</div>
<div style="left:320px;top:561px;width:51px;height:13px;background:#ECE9D8;border-top:1px solid #ACA899;border-left:1px solid #ACA899;border-right:1px solid #fff;border-bottom:1px solid #fff;"></div>
<div class="t" style="right:480.40px;top:563.23px;font-family:'Liberation Mono',monospace;font-size:11px;color:#1a1a1a;transform:scaleX(0.8258);transform-origin:100% 0;">1.394</div>
<div style="left:372px;top:561px;width:40px;height:13px;background:#ECE9D8;border-top:1px solid #ACA899;border-left:1px solid #ACA899;border-right:1px solid #fff;border-bottom:1px solid #fff;"></div>
<div style="left:374.0px;top:566.4px;width:34.3px;height:1.6px;background-image:linear-gradient(90deg,#333 1.6px,transparent 1.6px);background-size:5.45px 1.6px;"></div>
<div style="left:413px;top:561px;width:40px;height:13px;background:#ECE9D8;border-top:1px solid #ACA899;border-left:1px solid #ACA899;border-right:1px solid #fff;border-bottom:1px solid #fff;"></div>
<div class="t" style="right:398.40px;top:563.23px;font-family:'Liberation Mono',monospace;font-size:11px;color:#1a1a1a;transform:scaleX(0.8258);transform-origin:100% 0;">14.094</div>
<div style="left:454px;top:561px;width:49px;height:13px;background:#ECE9D8;border-top:1px solid #ACA899;border-left:1px solid #ACA899;border-right:1px solid #fff;border-bottom:1px solid #fff;"></div>
<div class="t" style="right:348.40px;top:563.23px;font-family:'Liberation Mono',monospace;font-size:11px;color:#1a1a1a;transform:scaleX(0.8258);transform-origin:100% 0;">17.400</div>
<div style="left:504px;top:561px;width:49px;height:13px;background:#ECE9D8;border-top:1px solid #ACA899;border-left:1px solid #ACA899;border-right:1px solid #fff;border-bottom:1px solid #fff;"></div>
<div class="t" style="right:298.40px;top:563.23px;font-family:'Liberation Mono',monospace;font-size:11px;color:#1a1a1a;transform:scaleX(0.8258);transform-origin:100% 0;">1.590</div>
<div style="left:196px;top:575px;width:30px;height:13px;background:#ECE9D8;border-top:1px solid #ACA899;border-left:1px solid #ACA899;border-right:1px solid #fff;border-bottom:1px solid #fff;"></div>
<div style="left:227px;top:575px;width:51px;height:13px;background:#ECE9D8;border-top:1px solid #ACA899;border-left:1px solid #ACA899;border-right:1px solid #fff;border-bottom:1px solid #fff;"></div>
<div class="t" style="right:573.40px;top:577.23px;font-family:'Liberation Mono',monospace;font-size:11px;color:#1a1a1a;transform:scaleX(0.8258);transform-origin:100% 0;">12.556</div>
<div style="left:279px;top:575px;width:40px;height:13px;background:#ECE9D8;border-top:1px solid #ACA899;border-left:1px solid #ACA899;border-right:1px solid #fff;border-bottom:1px solid #fff;"></div>
<div class="t" style="right:532.40px;top:577.23px;font-family:'Liberation Mono',monospace;font-size:11px;color:#1a1a1a;transform:scaleX(0.8258);transform-origin:100% 0;">1.246</div>
<div style="left:320px;top:575px;width:51px;height:13px;background:#ECE9D8;border-top:1px solid #ACA899;border-left:1px solid #ACA899;border-right:1px solid #fff;border-bottom:1px solid #fff;"></div>
<div class="t" style="right:480.40px;top:577.23px;font-family:'Liberation Mono',monospace;font-size:11px;color:#1a1a1a;transform:scaleX(0.8258);transform-origin:100% 0;">12.617</div>
<div style="left:372px;top:575px;width:40px;height:13px;background:#ECE9D8;border-top:1px solid #ACA899;border-left:1px solid #ACA899;border-right:1px solid #fff;border-bottom:1px solid #fff;"></div>
<div class="t" style="right:439.40px;top:577.23px;font-family:'Liberation Mono',monospace;font-size:11px;color:#1a1a1a;transform:scaleX(0.8258);transform-origin:100% 0;">-5.668</div>
<div style="left:413px;top:575px;width:40px;height:13px;background:#ECE9D8;border-top:1px solid #ACA899;border-left:1px solid #ACA899;border-right:1px solid #fff;border-bottom:1px solid #fff;"></div>
<div style="left:415.0px;top:580.4px;width:34.3px;height:1.6px;background-image:linear-gradient(90deg,#333 1.6px,transparent 1.6px);background-size:5.45px 1.6px;"></div>
<div style="left:454px;top:575px;width:49px;height:13px;background:#ECE9D8;border-top:1px solid #ACA899;border-left:1px solid #ACA899;border-right:1px solid #fff;border-bottom:1px solid #fff;"></div>
<div style="left:465.0px;top:580.4px;width:34.3px;height:1.6px;background-image:linear-gradient(90deg,#333 1.6px,transparent 1.6px);background-size:5.45px 1.6px;"></div>
<div style="left:504px;top:575px;width:49px;height:13px;background:#ECE9D8;border-top:1px solid #ACA899;border-left:1px solid #ACA899;border-right:1px solid #fff;border-bottom:1px solid #fff;"></div>
<div style="left:515.0px;top:580.4px;width:34.3px;height:1.6px;background-image:linear-gradient(90deg,#333 1.6px,transparent 1.6px);background-size:5.45px 1.6px;"></div>
<div style="left:196px;top:589px;width:30px;height:13px;background:#ECE9D8;border-top:1px solid #ACA899;border-left:1px solid #ACA899;border-right:1px solid #fff;border-bottom:1px solid #fff;"></div>
<div class="t" style="right:626.50px;top:591.53px;font-family:'Liberation Mono',monospace;font-size:11px;color:#1a1a1a;transform:scaleX(0.9700);transform-origin:100% 0;"><span style="font-size:88%">終点</span></div>
<div style="left:227px;top:589px;width:51px;height:13px;background:#ECE9D8;border-top:1px solid #ACA899;border-left:1px solid #ACA899;border-right:1px solid #fff;border-bottom:1px solid #fff;"></div>
<div style="left:240.0px;top:594.4px;width:34.3px;height:1.6px;background-image:linear-gradient(90deg,#333 1.6px,transparent 1.6px);background-size:5.45px 1.6px;"></div>
<div style="left:279px;top:589px;width:40px;height:13px;background:#ECE9D8;border-top:1px solid #ACA899;border-left:1px solid #ACA899;border-right:1px solid #fff;border-bottom:1px solid #fff;"></div>
<div style="left:281.0px;top:594.4px;width:34.3px;height:1.6px;background-image:linear-gradient(90deg,#333 1.6px,transparent 1.6px);background-size:5.45px 1.6px;"></div>
<div style="left:320px;top:589px;width:51px;height:13px;background:#ECE9D8;border-top:1px solid #ACA899;border-left:1px solid #ACA899;border-right:1px solid #fff;border-bottom:1px solid #fff;"></div>
<div style="left:333.0px;top:594.4px;width:34.3px;height:1.6px;background-image:linear-gradient(90deg,#333 1.6px,transparent 1.6px);background-size:5.45px 1.6px;"></div>
<div style="left:372px;top:589px;width:40px;height:13px;background:#ECE9D8;border-top:1px solid #ACA899;border-left:1px solid #ACA899;border-right:1px solid #fff;border-bottom:1px solid #fff;"></div>
<div style="left:374.0px;top:594.4px;width:34.3px;height:1.6px;background-image:linear-gradient(90deg,#333 1.6px,transparent 1.6px);background-size:5.45px 1.6px;"></div>
<div style="left:413px;top:589px;width:40px;height:13px;background:#ECE9D8;border-top:1px solid #ACA899;border-left:1px solid #ACA899;border-right:1px solid #fff;border-bottom:1px solid #fff;"></div>
<div style="left:415.0px;top:594.4px;width:34.3px;height:1.6px;background-image:linear-gradient(90deg,#333 1.6px,transparent 1.6px);background-size:5.45px 1.6px;"></div>
<div style="left:454px;top:589px;width:49px;height:13px;background:#ECE9D8;border-top:1px solid #ACA899;border-left:1px solid #ACA899;border-right:1px solid #fff;border-bottom:1px solid #fff;"></div>
<div class="t" style="right:348.40px;top:591.23px;font-family:'Liberation Mono',monospace;font-size:11px;color:#1a1a1a;transform:scaleX(0.8258);transform-origin:100% 0;">30.650</div>
<div style="left:504px;top:589px;width:49px;height:13px;background:#ECE9D8;border-top:1px solid #ACA899;border-left:1px solid #ACA899;border-right:1px solid #fff;border-bottom:1px solid #fff;"></div>
<div class="t" style="right:298.40px;top:591.23px;font-family:'Liberation Mono',monospace;font-size:11px;color:#1a1a1a;transform:scaleX(0.8258);transform-origin:100% 0;">0.275</div>
<div style="left:196px;top:603px;width:30px;height:13px;background:#ECE9D8;border-top:1px solid #ACA899;border-left:1px solid #ACA899;border-right:1px solid #fff;border-bottom:1px solid #fff;"></div>
<div class="t" style="left:198.00px;top:605.23px;font-family:'Liberation Mono',monospace;font-size:11px;color:#1a1a1a;transform:scaleX(0.7451);transform-origin:0 0;">total</div>
<div style="left:227px;top:603px;width:51px;height:13px;background:#ECE9D8;border-top:1px solid #ACA899;border-left:1px solid #ACA899;border-right:1px solid #fff;border-bottom:1px solid #fff;"></div>
<div class="t" style="right:573.40px;top:605.23px;font-family:'Liberation Mono',monospace;font-size:11px;color:#1a1a1a;transform:scaleX(0.8258);transform-origin:100% 0;">( 30.500)</div>
<div style="left:279px;top:603px;width:40px;height:13px;background:#ECE9D8;border-top:1px solid #ACA899;border-left:1px solid #ACA899;border-right:1px solid #fff;border-bottom:1px solid #fff;"></div>
<div style="left:320px;top:603px;width:51px;height:13px;background:#ECE9D8;border-top:1px solid #ACA899;border-left:1px solid #ACA899;border-right:1px solid #fff;border-bottom:1px solid #fff;"></div>
<div class="t" style="right:480.40px;top:605.23px;font-family:'Liberation Mono',monospace;font-size:11px;color:#1a1a1a;transform:scaleX(0.8258);transform-origin:100% 0;">( 30.628)</div>
<div style="left:372px;top:603px;width:40px;height:13px;background:#ECE9D8;border-top:1px solid #ACA899;border-left:1px solid #ACA899;border-right:1px solid #fff;border-bottom:1px solid #fff;"></div>
<div style="left:413px;top:603px;width:40px;height:13px;background:#ECE9D8;border-top:1px solid #ACA899;border-left:1px solid #ACA899;border-right:1px solid #fff;border-bottom:1px solid #fff;"></div>
<div style="left:454px;top:603px;width:49px;height:13px;background:#ECE9D8;border-top:1px solid #ACA899;border-left:1px solid #ACA899;border-right:1px solid #fff;border-bottom:1px solid #fff;"></div>
<div style="left:504px;top:603px;width:49px;height:13px;background:#ECE9D8;border-top:1px solid #ACA899;border-left:1px solid #ACA899;border-right:1px solid #fff;border-bottom:1px solid #fff;"></div>
<div style="left:0px;top:668px;width:166px;height:1px;background:#ACA899;"></div>
<div style="left:168px;top:668px;width:682px;height:1px;background:#ACA899;"></div>
<div style="left:166px;top:668px;width:1px;height:12px;background:#fff;"></div>
<div style="left:167px;top:668px;width:1px;height:12px;background:#ACA899;"></div>
<div style="left:34px;top:668px;width:1px;height:12px;background:#ACA899;"></div>
<div style="left:33px;top:668px;width:1px;height:12px;background:#fff;"></div>
<div style="left:0px;top:668px;width:1px;height:12px;background:#ACA899;"></div>
<div style="left:0px;top:49px;width:1px;height:617px;background:#fff;"></div>
<div style="left:0px;top:679px;width:850px;height:1px;background:#fff;"></div>
</body></html>
